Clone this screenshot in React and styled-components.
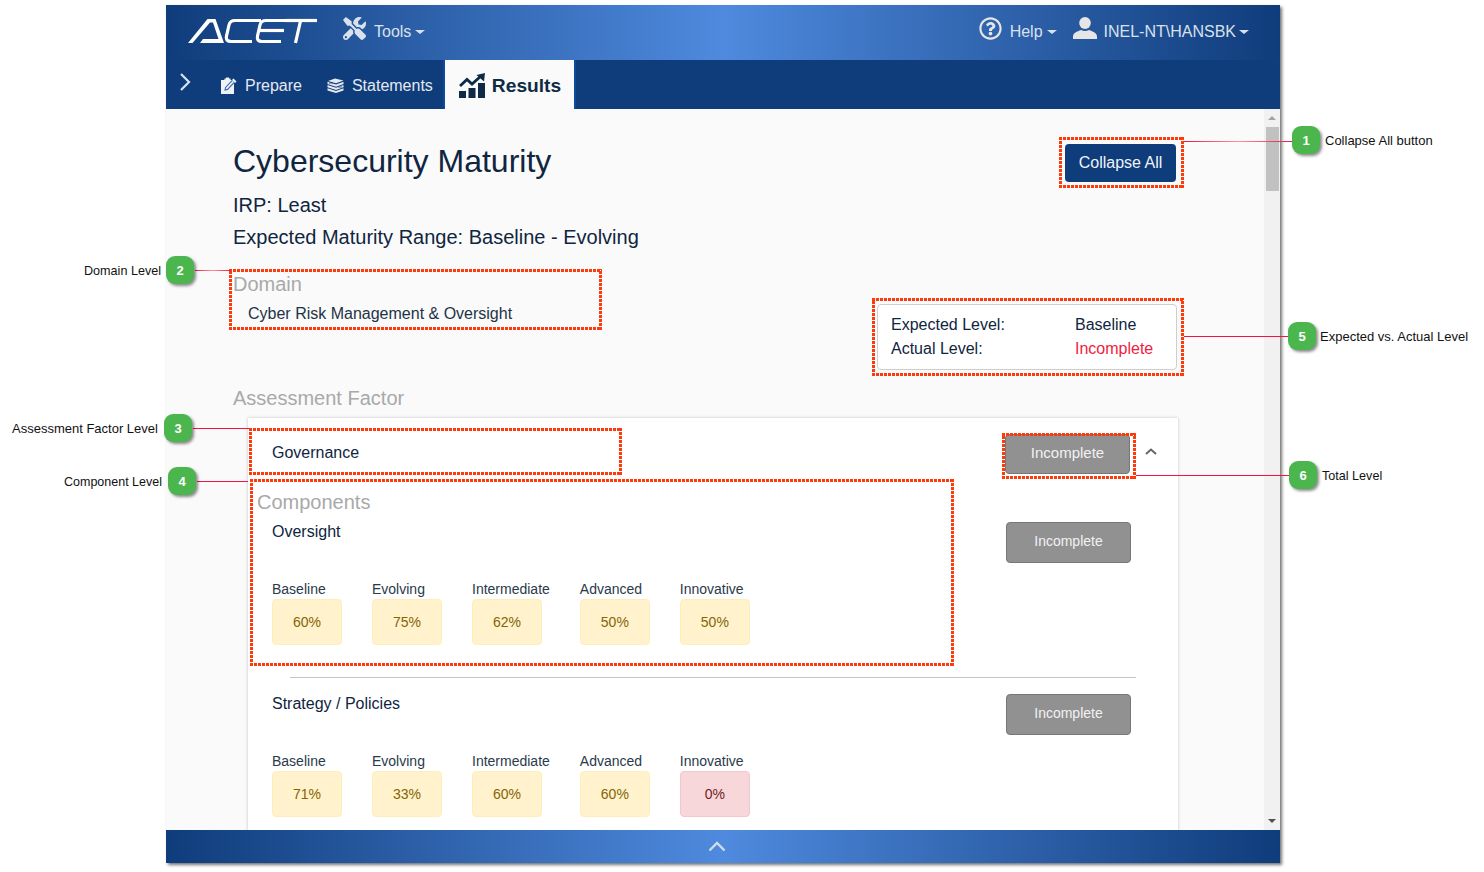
import React from 'react';
import styled, { createGlobalStyle } from 'styled-components';
import { FaTools, FaRegQuestionCircle } from 'react-icons/fa';

const Global = createGlobalStyle`
  html, body { margin: 0; padding: 0; background: #fff; overflow: hidden; }
  body { font-family: "Liberation Sans", Arial, sans-serif; color: #0f2540; }
  * { box-sizing: border-box; }
`;

const Canvas = styled.div`
  position: relative;
  width: 1484px;
  height: 872px;
  padding: 5px 0 0 166px;
  overflow: hidden;
`;
const Win = styled.div`
  width: 1114px;
  height: 858px;
  display: flex;
  flex-direction: column;
  box-shadow: 2px 2px 3px rgba(0,0,0,.55);
`;
const barGradient = 'linear-gradient(90deg, #0f3c7b 0%, #4f8ade 50%, #0f3c7b 100%)';
const TopBar = styled.header`
  height: 55px;
  background: ${barGradient};
  display: flex;
  align-items: center;
  padding: 0 31px 2px 22px;
  color: #d9e1ec;
  font-size: 16px;
  flex: none;
`;
const Logo = styled.svg`
  width: 130px;
  height: 28px;
  margin: -2px 25px 0 0;
  flex: none;
`;
const MenuItem = styled.div`
  display: flex;
  align-items: center;
  gap: ${p => p.$gap || 7}px;
  margin-left: ${p => p.$ml || 0}px;
`;
const RaisedIcon = styled.span`
  display: flex;
  margin-top: -7px;
`;
const Caret = styled.span`
  display: inline-block;
  width: 0;
  height: 0;
  margin-left: -4px;
  border-left: 5px solid transparent;
  border-right: 5px solid transparent;
  border-top: 4px solid currentColor;
`;
const Spacer = styled.div`flex: 1;`;
const NavBar = styled.nav`
  height: 49px;
  background: #0f3c7b;
  display: flex;
  align-items: stretch;
  flex: none;
  color: #e4e9f0;
  font-size: 16px;
`;
const NavToggle = styled.div`
  width: 54px;
  display: flex;
  align-items: center;
  padding: 0 0 5px 13px;
`;
const NavItem = styled.div`
  display: flex;
  align-items: center;
  gap: 8px;
  margin-right: ${p => p.$mr || 0}px;
  padding-top: 2px;
`;
const ActiveTab = styled.div`
  width: 133px;
  margin-left: 10px;
  display: flex;
  align-items: center;
  gap: 7px;
  padding: 2px 0 0 14px;
  background: #fafafa;
  color: #0f2a44;
  font-size: 19.2px;
  font-weight: 700;
  border-left: 2px solid #0e4a9a;
  border-right: 2px solid #0e4a9a;
`;
const Main = styled.div`
  flex: 1;
  min-height: 0;
  display: flex;
  background: #fafafa;
  overflow: hidden;
`;
const Content = styled.main`
  flex: 1;
  min-width: 0;
  padding: 33px 0 0 67px;
  overflow: hidden;
`;
const Head = styled.div`
  display: flex;
  justify-content: space-between;
  align-items: flex-start;
  padding-right: 88px;
`;
const Title = styled.h1`
  margin: 0;
  font-size: 32px;
  line-height: 38px;
  font-weight: 400;
  color: #0f2540;
`;
const SubLine = styled.div`
  font-size: 20px;
  line-height: 24px;
  margin-top: ${p => p.$mt}px;
  color: #0f2540;
`;
const CollapseBtn = styled.button`
  width: 111px;
  height: 38px;
  margin-top: 2px;
  padding: 0;
  border: 0;
  border-radius: 4px;
  background: #0f3c7b;
  color: #f0f4f8;
  font: 16px "Liberation Sans", Arial, sans-serif;
`;
const SectionLabel = styled.div`
  font-size: 20px;
  line-height: 24px;
  color: #a9a9a9;
`;
const DomainWrap = styled.div`
  margin-top: 23px;
  height: 114px;
  display: flex;
  justify-content: space-between;
  padding-right: 87px;
`;
const DomainName = styled.div`
  margin: 8px 0 0 15px;
  font-size: 16px;
  line-height: 20px;
  color: #1d3347;
`;
const LevelBox = styled.div`
  width: 300px;
  height: 66px;
  margin-top: 32px;
  background: #fff;
  border: 1px solid #cfcfcf;
  border-radius: 4px;
  padding: 8px 13px;
  display: grid;
  grid-template-columns: 184px 1fr;
  grid-auto-rows: 24px;
  align-items: center;
  font-size: 16px;
  color: #0f2540;
`;
const Incomplete = styled.span`color: #f0213f;`;
const Card = styled.section`
  margin: 8px 0 0 15px;
  width: 930px;
  background: #fff;
  padding: 0 47px 40px 24px;
  box-shadow: 0 0 3px rgba(0,0,0,.22);
`;
const FactorHead = styled.div`
  height: 72px;
  padding-top: 16px;
  display: flex;
  align-items: flex-start;
  justify-content: space-between;
  font-size: 16px;
  line-height: 38px;
  color: #0f2540;
`;
const FactorRight = styled.div`
  display: flex;
  align-items: flex-start;
  gap: 15px;
  margin-right: -26px;
`;
const Chevron = styled.svg`
  width: 12px;
  height: 7px;
  margin-top: 14px;
`;
const StatusBtn = styled.div`
  width: 125px;
  height: ${p => p.$h || 41}px;
  margin-top: ${p => p.$mt || 0}px;
  padding-bottom: 3px;
  display: flex;
  align-items: center;
  justify-content: center;
  background: #919191;
  border: 1px solid #777;
  border-radius: 4px;
  color: #f1f1f1;
  font-size: ${p => p.$fs || 14}px;
  line-height: 1;
  flex: none;
`;
const ComponentsLabel = styled(SectionLabel)`
  margin-left: -15px;
  height: 24px;
`;
const CompRow = styled.div`
  display: flex;
  justify-content: space-between;
  align-items: flex-start;
  padding-bottom: ${p => p.$pb || 0}px;
`;
const CompName = styled.div`
  font-size: 16px;
  line-height: 20px;
  color: #0f2540;
  margin-top: ${p => p.$mt || 0}px;
`;
const Levels = styled.div`
  display: flex;
  gap: 30px;
  margin-top: 39px;
`;
const Level = styled.div`
  display: flex;
  flex-direction: column;
  font-size: 14px;
  color: #2a3a4a;
`;
const LevelName = styled.div`
  line-height: 17px;
  height: 18px;
  white-space: nowrap;
`;
const Pct = styled.div`
  width: 70px;
  height: 46px;
  display: flex;
  align-items: center;
  justify-content: center;
  border-radius: 4px;
  font-size: 14px;
  background: ${p => p.$low ? '#f8d7da' : '#fff2cd'};
  border: 1px solid ${p => p.$low ? '#f5c6cb' : '#ffeeba'};
  color: ${p => p.$low ? '#721c24' : '#856404'};
`;
const Divider = styled.hr`
  margin: 0 -5px 16px 18px;
  border: 0;
  border-top: 1px solid #c4c4c4;
`;
const Scrollbar = styled.div`
  width: 16px;
  flex: none;
  background: #f1f1f1;
  display: flex;
  flex-direction: column;
  align-items: center;
`;
const ScrollBtn = styled.div`
  height: 18px;
  flex: none;
  display: flex;
  align-items: center;
  justify-content: center;
  &::before {
    content: '';
    border-left: 4px solid transparent;
    border-right: 4px solid transparent;
    ${p => p.$up ? 'border-bottom: 4px solid #a3a3a3;' : 'border-top: 4px solid #505050;'}
  }
`;
const Thumb = styled.div`
  width: 13px;
  height: 64px;
  margin-left: 1px;
  background: #c1c1c1;
`;
const ScrollRest = styled.div`flex: 1;`;
const Footer = styled.footer`
  height: 33px;
  flex: none;
  background: ${barGradient};
  display: flex;
  align-items: center;
  justify-content: center;
  padding-right: 12px;
  padding-bottom: 2px;
`;
const FootChevron = styled.svg`
  width: 18px;
  height: 12px;
`;

/* annotation layer: overlays on a free canvas */
const dash = (dir) => `repeating-linear-gradient(${dir}, #ff3a0a 0 3px, transparent 3px 4px)`;
const DashBox = styled.div`
  position: absolute;
  left: ${p => p.$x}px;
  top: ${p => p.$y}px;
  width: ${p => p.$w}px;
  height: ${p => p.$h}px;
  pointer-events: none;
  background-image: ${dash('90deg')}, ${dash('90deg')}, ${dash('0deg')}, ${dash('0deg')};
  background-size: 100% 3px, 100% 3px, 3px 100%, 3px 100%;
  background-position: top left, bottom left, top left, top right;
  background-repeat: no-repeat;
`;
const Lead = styled.div`
  position: absolute;
  left: ${p => p.$x}px;
  top: ${p => p.$y}px;
  width: ${p => p.$w}px;
  height: 1px;
  background: ${p => p.$soft ? 'linear-gradient(90deg, #f01445, #ff8fa8 50%, #f01445)' : '#f01445'};
`;
const Badge = styled.div`
  position: absolute;
  left: ${p => p.$x}px;
  top: ${p => p.$y}px;
  width: 28px;
  height: 28px;
  border-radius: 9px;
  background: #4bb64e;
  color: #fff;
  font: 700 13px "Liberation Sans", Arial, sans-serif;
  display: flex;
  align-items: center;
  justify-content: center;
  box-shadow: 2px 2px 3px rgba(0,0,0,.45);
`;
const Note = styled.div`
  position: absolute;
  left: ${p => p.$x}px;
  top: ${p => p.$y}px;
  font-size: ${p => p.$fs}px;
  line-height: 14px;
  color: #111;
  white-space: nowrap;
`;

const rows = [
  { name: 'Oversight', vals: ['60%', '75%', '62%', '50%', '50%'] },
  { name: 'Strategy / Policies', vals: ['71%', '33%', '60%', '60%', '0%'] },
];
const levelNames = ['Baseline', 'Evolving', 'Intermediate', 'Advanced', 'Innovative'];

const boxes = [
  [1059, 137, 125, 51], [229, 269, 373, 61], [872, 298, 312, 78],
  [249, 428, 373, 47], [1002, 433, 134, 46], [250, 479, 704, 187],
];
const leads = [
  [1184, 141, 108, true], [195, 270, 36, true], [1184, 336, 104, false],
  [193, 428, 56, false], [197, 481, 51, false], [1136, 475, 153, false],
];
const badges = [[1292, 126, 1], [166, 256, 2], [164, 414, 3], [168, 467, 4], [1288, 322, 5], [1289, 461, 6]];
const notes = [
  [1325, 134, 'Collapse All button', 13], [84, 264, 'Domain Level', 12.6], [12, 422, 'Assessment Factor Level', 13],
  [64, 475, 'Component Level', 12.5], [1320, 330, 'Expected vs. Actual Level', 13], [1322, 469, 'Total Level', 12.6],
];

const LevelList = ({ vals }) => (
  <Levels>
    {levelNames.map((n, i) => (
      <Level key={n}>
        <LevelName>{n}</LevelName>
        <Pct $low={vals[i] === '0%'}>{vals[i]}</Pct>
      </Level>
    ))}
  </Levels>
);

const PrepareIcon = () => (
  <svg width="17" height="17" viewBox="0 0 17 17" aria-hidden="true">
    <path d="M1 3h3.500V1.500h1.500V.5h3v1h1.500V3H14v14H1z" fill="#eef1f6" />
    <path d="M5 13l.6-2.600 7-7.400 2 2-7 7.400z" fill="#eef1f6" stroke="#3c6aa8" strokeWidth="1.100" />
    <path d="M13.500 1.500l3 3-1.500 1.500-3-3z" fill="#eef1f6" />
  </svg>
);
const StatementsIcon = () => (
  <svg width="17" height="15" viewBox="0 0 17 15" aria-hidden="true" fill="#e4e9f0">
    <path d="M1 3 8 .5 16.500 2.500 9 5.200z" />
    <path d="M.5 3.800 9 6.500l7.500-2.700v2.200L9 8.700.5 6z" />
    <path d="M.5 7 9 9.700l7.500-2.700v2.300L9 12 .5 9.300z" />
    <path d="M.5 10.300 9 13l7.500-2.700v2.200L9 15 .5 12.500z" />
    <path d="M2 5h4M11 9h4" stroke="#0f3c7b" strokeWidth=".8" />
  </svg>
);
const ResultsIcon = () => (
  <svg width="26" height="25" viewBox="0 0 26 25" aria-hidden="true" fill="#0f2a44">
    <rect x="0" y="18" width="7" height="7" />
    <rect x="9.500" y="15" width="7" height="10" />
    <rect x="19" y="10" width="7" height="15" />
    <path d="M1 13l7-6.500 5 4.500 9-8" fill="none" stroke="#0f2a44" strokeWidth="2.800" />
    <path d="M17.500 2 26 0l-1 8.500z" />
  </svg>
);
const UserIcon = () => (
  <svg width="24" height="22" viewBox="0 0 24 22" aria-hidden="true" fill="#e6e6e6">
    <ellipse cx="12" cy="6" rx="5.800" ry="6" />
    <path d="M0 22v-2.500c0-3.500 4-5 8-6.500 2.500 1.200 5.500 1.200 8 0 4 1.500 8 3 8 6.500V22z" />
  </svg>
);

export default function App() {
  return (
    <Canvas>
      <Global />
      <Win>
        <TopBar>
          <Logo viewBox="0 0 130 28" role="img" aria-label="logo">
            <path d="M0 26 19.500 2h8L36 26H12l3-4h15.500L25 5.500h-3L4.500 26z" fill="#fff" />
            <g fill="none" stroke="#fff" strokeWidth="3.200">
              <path d="M73 3.500H47Q42 3.500 41 8l-2.500 11q-1 5.500 4.500 5.500h21" />
              <path d="M100 3.500H78Q73 3.500 72 8l-2.500 11q-1 5.500 4.500 5.500h19" />
              <path d="M72 13.500h24" />
              <path d="M97 3.500h32" />
              <path d="M112.500 4 107.500 26" />
            </g>
          </Logo>
          <MenuItem $gap={8}>
            <RaisedIcon><FaTools size={23} color="#d9e1ec" /></RaisedIcon>
            <span>Tools</span>
            <Caret />
          </MenuItem>
          <Spacer />
          <MenuItem $gap={8}>
            <RaisedIcon><FaRegQuestionCircle size={23} color="#e6e6e6" /></RaisedIcon>
            <span>Help</span>
            <Caret />
          </MenuItem>
          <MenuItem $ml={16}>
            <RaisedIcon><UserIcon /></RaisedIcon>
            <span>INEL-NT\HANSBK</span>
            <Caret />
          </MenuItem>
        </TopBar>
        <NavBar>
          <NavToggle>
            <svg width="13" height="20" viewBox="0 0 13 20" aria-hidden="true">
              <path d="M2 2l8 8-8 8" fill="none" stroke="#d5e3f2" strokeWidth="2.200" />
            </svg>
          </NavToggle>
          <NavItem $mr={25}><PrepareIcon /><span>Prepare</span></NavItem>
          <NavItem><StatementsIcon /><span>Statements</span></NavItem>
          <ActiveTab><ResultsIcon /><span>Results</span></ActiveTab>
        </NavBar>
        <Main>
          <Content>
            <Head>
              <div>
                <Title>Cybersecurity Maturity</Title>
                <SubLine $mt={13}>IRP: Least</SubLine>
                <SubLine $mt={8}>Expected Maturity Range: Baseline - Evolving</SubLine>
              </div>
              <CollapseBtn>Collapse All</CollapseBtn>
            </Head>
            <DomainWrap>
              <div>
                <SectionLabel>Domain</SectionLabel>
                <DomainName>Cyber Risk Management &amp; Oversight</DomainName>
              </div>
              <LevelBox>
                <span>Expected Level:</span><span>Baseline</span>
                <span>Actual Level:</span><Incomplete>Incomplete</Incomplete>
              </LevelBox>
            </DomainWrap>
            <SectionLabel>Assessment Factor</SectionLabel>
            <Card>
              <FactorHead>
                <span>Governance</span>
                <FactorRight>
                  <StatusBtn $h={40} $fs={15}>Incomplete</StatusBtn>
                  <Chevron viewBox="0 0 12 7" aria-hidden="true">
                    <path d="M1 6l5-4.500L11 6" fill="none" stroke="#666" strokeWidth="2" />
                  </Chevron>
                </FactorRight>
              </FactorHead>
              <ComponentsLabel>Components</ComponentsLabel>
              <CompRow $pb={32}>
                <div>
                  <CompName $mt={8}>{rows[0].name}</CompName>
                  <LevelList vals={rows[0].vals} />
                </div>
                <StatusBtn $mt={8}>Incomplete</StatusBtn>
              </CompRow>
              <Divider />
              <CompRow>
                <div>
                  <CompName>{rows[1].name}</CompName>
                  <LevelList vals={rows[1].vals} />
                </div>
                <StatusBtn>Incomplete</StatusBtn>
              </CompRow>
            </Card>
          </Content>
          <Scrollbar>
            <ScrollBtn $up />
            <Thumb />
            <ScrollRest />
            <ScrollBtn />
          </Scrollbar>
        </Main>
        <Footer>
          <FootChevron viewBox="0 0 18 12" aria-hidden="true">
            <path d="M1.500 10.500 9 3l7.500 7.500" fill="none" stroke="#d3dceb" strokeWidth="2.400" />
          </FootChevron>
        </Footer>
      </Win>

      {boxes.map(([x, y, w, h]) => <DashBox key={`${x}-${y}`} $x={x} $y={y} $w={w} $h={h} />)}
      {leads.map(([x, y, w, soft]) => <Lead key={`${x}-${y}`} $x={x} $y={y} $w={w} $soft={soft} />)}
      {badges.map(([x, y, n]) => <Badge key={n} $x={x} $y={y}>{n}</Badge>)}
      {notes.map(([x, y, t, fs]) => <Note key={t} $x={x} $y={y} $fs={fs}>{t}</Note>)}
    </Canvas>
  );
}
